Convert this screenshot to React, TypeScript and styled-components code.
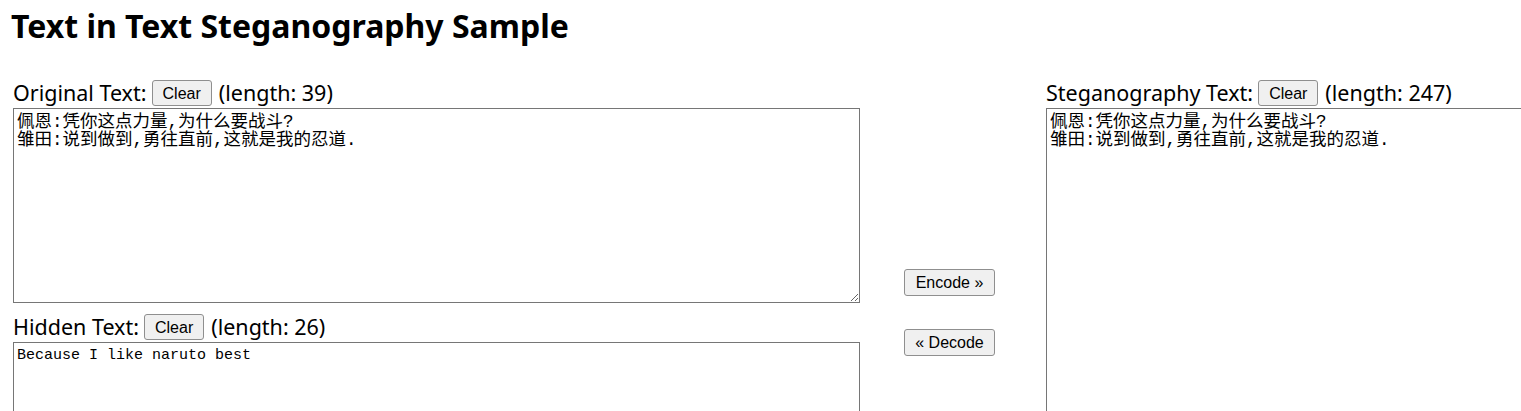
import React, { useState } from "react";
import styled, { createGlobalStyle } from "styled-components";

const Global = createGlobalStyle`
  html, body { margin: 0; padding: 0; background: #fff; overflow: hidden; }
  body { font-family: "Noto Sans", "Noto Sans CJK SC", sans-serif; color: #000; }
`;

const Page = styled.div`
  padding: 0 0 0 13px;
  width: 2000px;
`;

const Title = styled.h1`
  margin: 0;
  padding: 6px 0 0 0;
  margin-left: -2px;
  font-family: "Noto Sans", sans-serif;
  font-weight: 700;
  font-size: 32px;
  line-height: 40px;
  height: 80px;
  box-sizing: border-box;
`;

const Columns = styled.div`
  display: flex;
  align-items: flex-start;
`;

const Column = styled.div`
  display: flex;
  flex-direction: column;
  flex-shrink: 0;
  width: 847px;
`;

const Middle = styled.div`
  display: flex;
  flex-direction: column;
  align-items: flex-start;
  flex-shrink: 0;
  width: 186px;
  padding: 189px 0 0 44px;
  box-sizing: border-box;
  gap: 33px;
`;

const LabelRow = styled.div<{ $top?: number }>`
  display: flex;
  align-items: center;
  height: 26px;
  margin-top: ${(p) => p.$top ?? 0}px;
  margin-bottom: 2px;
  font-size: 21.5px;
  line-height: 26px;
  white-space: nowrap;
`;

const Label = styled.span`
  margin-right: 5px;
`;

const Button = styled.button`
  font-family: "Liberation Sans", Arial, sans-serif;
  font-size: 16px;
  height: 26px;
  padding: 2px 10px 0;
  background: #f0f0f0;
  border: 1px solid #8f8f8f;
  border-radius: 3px;
  color: #000;
  margin-right: 7px;
  cursor: pointer;
`;

const MidButton = styled(Button)`
  width: 91px;
  height: 27px;
  padding: 1px 0 0;
  margin: 0;
`;

const Area = styled.textarea<{ $h: number; $size: number }>`
  box-sizing: border-box;
  width: 847px;
  height: ${(p) => p.$h}px;
  border: 1px solid #767676;
  padding: 4px 3px 3px;
  margin: 0;
  font-family: "Liberation Mono", "Noto Sans CJK SC", monospace;
  font-size: ${(p) => p.$size}px;
  line-height: 18px;
  color: #000;
  outline: none;
  resize: both;
`;

const ORIGINAL = "佩恩:凭你这点力量,为什么要战斗?\n雏田:说到做到,勇往直前,这就是我的忍道.";

export default function App() {
  const [orig, setOrig] = useState(ORIGINAL);
  const [hidden, setHidden] = useState("Because I like naruto best");
  const [steg, setSteg] = useState(ORIGINAL);

  return (
    <Page>
      <Global />
      <Title>Text in Text Steganography Sample</Title>
      <Columns>
        <Column>
          <LabelRow>
            <Label>Original Text:</Label>
            <Button onClick={() => setOrig("")}>Clear</Button>
            <span>(length: 39)</span>
          </LabelRow>
          <Area $h={195} $size={17.5} value={orig} onChange={(e) => setOrig(e.target.value)} />
          <LabelRow $top={11}>
            <Label>Hidden Text:</Label>
            <Button onClick={() => setHidden("")}>Clear</Button>
            <span>(length: 26)</span>
          </LabelRow>
          <Area $h={195} $size={15} value={hidden} onChange={(e) => setHidden(e.target.value)} />
        </Column>
        <Middle>
          <MidButton>Encode »</MidButton>
          <MidButton>« Decode</MidButton>
        </Middle>
        <Column>
          <LabelRow>
            <Label>Steganography Text:</Label>
            <Button onClick={() => setSteg("")}>Clear</Button>
            <span>(length: 247)</span>
          </LabelRow>
          <Area $h={430} $size={17.5} value={steg} onChange={(e) => setSteg(e.target.value)} />
        </Column>
      </Columns>
    </Page>
  );
}
